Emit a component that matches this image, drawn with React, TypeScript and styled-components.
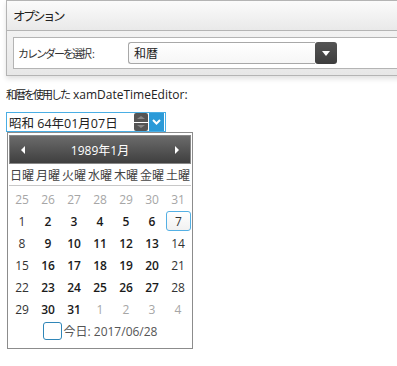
import React from "react";
import styled, { createGlobalStyle } from "styled-components";

const Global = createGlobalStyle`
  html, body { margin: 0; padding: 0; background: #fff; overflow: hidden; }
  body { font-family: "Open Sans", "Noto Sans CJK JP", sans-serif; color: #222; }
`;

const Page = styled.div`
  width: 397px;
  height: 366px;
  overflow: hidden;
  position: relative;
`;

const Panel = styled.section`
  margin-left: 6px;
  width: 400px;
  border: 1px solid #b4b4b4;
  box-shadow: 0 3px 5px rgba(0, 0, 0, 0.12);
`;

const PanelHeader = styled.div`
  height: 29px;
  display: flex;
  align-items: center;
  padding-left: 6px;
  font-size: 12.5px;
  letter-spacing: -2.5px;
  color: #222;
  background: linear-gradient(#fbfbfb, #e9e9e9);
  border-bottom: 1px solid #b4b4b4;
`;

const PanelBody = styled.div`
  background: linear-gradient(#f2f2f2, #e7e7e7);
  padding: 6px 0 6px 6px;
`;

const OptionRow = styled.div`
  height: 30px;
  display: flex;
  align-items: center;
  background: #fff;
  border: 1px solid #b4b4b4;
  border-right: none;
  padding-left: 4px;
`;

const Label = styled.span`
  width: 110px;
  font-size: 11px;
  letter-spacing: -2px;
  color: #333;
`;

const Colon = styled.span`
  letter-spacing: 0;
  margin-left: 2px;
`;

const Combo = styled.div`
  width: 181px;
  height: 20px;
  border: 1px solid #a8a8a8;
  border-right: none;
  border-radius: 3px 0 0 3px;
  display: flex;
  align-items: center;
  padding-left: 5px;
  font-size: 12px;
  color: #222;
  background: linear-gradient(#fff, #f6f6f6);
`;

const ComboButton = styled.div`
  width: 22px;
  height: 22px;
  border-radius: 3px;
  background: linear-gradient(#555, #3d3d3d);
  display: flex;
  align-items: center;
  justify-content: center;
  &::after {
    content: "";
    border-left: 4px solid transparent;
    border-right: 4px solid transparent;
    border-top: 5px solid #fff;
  }
`;

const Caption = styled.div`
  margin: 12px 0 0 6px;
  font-size: 12px;
  color: #222;
  height: 14px;
  line-height: 14px;
  white-space: nowrap;
`;

const Jp = styled.span`
  font-size: 11px;
  letter-spacing: -2px;
  margin-right: 4px;
`;

const EditorWrap = styled.div`
  margin: 10px 0 0 6px;
  width: 187px;
`;

const Editor = styled.div`
  width: 158px;
  height: 18px;
  border: 1px solid #4aaee4;
  display: flex;
  align-items: center;
  background: #fff;
`;

const EditorText = styled.span`
  flex: 1;
  padding-left: 2px;
  font-size: 12.5px;
  color: #222;
  white-space: nowrap;
`;

const Spin = styled.div`
  width: 14px;
  height: 18px;
  display: flex;
  flex-direction: column;
  gap: 1px;
  margin-right: 1px;
`;

const SpinHalf = styled.div<{ $up?: boolean }>`
  flex: 1;
  background: #555;
  border-radius: ${(p) => (p.$up ? "2px 2px 0 0" : "0 0 2px 2px")};
  display: flex;
  align-items: center;
  justify-content: center;
  &::after {
    content: "";
    border-left: 4px solid transparent;
    border-right: 4px solid transparent;
    ${(p) => (p.$up ? "border-bottom: 3px solid #888;" : "border-top: 3px solid #888;")}
  }
`;

const DropButton = styled.div`
  width: 15px;
  height: 18px;
  background: #2b9ad8;
  margin-right: 1px;
  display: flex;
  align-items: center;
  justify-content: center;
`;

const Calendar = styled.div`
  margin-left: 1px;
  width: 184px;
  height: 213px;
  border: 1px solid #8c8c8c;
  background: #fff;
  display: flex;
  flex-direction: column;
  padding-top: 2px;
`;

const CalHeader = styled.div`
  margin: 0 1px;
  height: 27px;
  border: 1px solid #888;
  background: linear-gradient(#6b6b6b, #3f3f3f);
  display: flex;
  align-items: center;
  justify-content: space-between;
  padding: 0 11px;
  color: #fff;
  font-size: 12px;
`;

const Arrow = styled.span<{ $dir: "l" | "r" }>`
  width: 0;
  height: 0;
  border-top: 4px solid transparent;
  border-bottom: 4px solid transparent;
  ${(p) => (p.$dir === "l" ? "border-right: 4px solid #fff;" : "border-left: 4px solid #fff;")}
`;

const Grid = styled.div`
  display: grid;
  grid-template-columns: repeat(7, 26px);
  margin-left: 1px;
`;

const DayName = styled.div`
  height: 21px;
  display: flex;
  align-items: center;
  justify-content: center;
  font-size: 12px;
  color: #444;
  border-bottom: 1px solid #c8c8c8;
  margin-bottom: 2px;
  font-family: "Noto Sans CJK JP", sans-serif;
`;

const DayCell = styled.div<{ $kind: "other" | "weekend" | "weekday"; $selected?: boolean }>`
  height: 22px;
  display: flex;
  align-items: center;
  justify-content: center;
  font-size: 12px;
  font-weight: ${(p) => (p.$kind === "weekday" ? 600 : 400)};
  color: ${(p) => (p.$kind === "other" ? "#a6a6a6" : p.$kind === "weekday" ? "#1a1a1a" : "#333")};
  box-sizing: border-box;
  ${(p) =>
    p.$selected
      ? "border: 1px solid #54b0e4; border-radius: 3px; background: linear-gradient(#fff, #f1f1f1); height: 20px; margin: 1px 0 1px 1px;"
      : ""}
`;

const TodayRow = styled.div`
  display: flex;
  align-items: center;
  justify-content: center;
  gap: 2px;
  margin-top: 1px;
  height: 20px;
  font-size: 12px;
  color: #555;
`;

const TodayBox = styled.span`
  width: 17px;
  height: 16px;
  border: 1px solid #2f86b8;
  border-radius: 3px;
`;

const dayNames = ["日曜", "月曜", "火曜", "水曜", "木曜", "金曜", "土曜"];

type Cell = { d: number; kind: "other" | "weekend" | "weekday"; selected?: boolean };

const buildCells = (): Cell[] => {
  const cells: Cell[] = [];
  for (let d = 25; d <= 31; d++) cells.push({ d, kind: "other" });
  for (let d = 1; d <= 31; d++) {
    const col = (d - 1) % 7;
    cells.push({ d, kind: col === 0 || col === 6 ? "weekend" : "weekday", selected: d === 7 });
  }
  for (let d = 1; d <= 4; d++) cells.push({ d, kind: "other" });
  return cells;
};

export default function App() {
  const cells = buildCells();
  return (
    <Page>
      <Global />
      <Panel>
        <PanelHeader>オプション</PanelHeader>
        <PanelBody>
          <OptionRow>
            <Label>
              カレンダーを選択<Colon>:</Colon>
            </Label>
            <Combo>和暦</Combo>
            <ComboButton />
          </OptionRow>
        </PanelBody>
      </Panel>
      <Caption>
        <Jp>和暦を使用した</Jp>xamDateTimeEditor:
      </Caption>
      <EditorWrap>
        <Editor>
          <EditorText>昭和 64年01月07日</EditorText>
          <Spin>
            <SpinHalf $up />
            <SpinHalf />
          </Spin>
          <DropButton>
            <svg width="9" height="6" viewBox="0 0 9 6">
              <path d="M1 1 L4.5 4.5 L8 1" fill="none" stroke="#fff" strokeWidth="2" />
            </svg>
          </DropButton>
        </Editor>
        <Calendar>
          <CalHeader>
            <Arrow $dir="l" />
            <span>1989年1月</span>
            <Arrow $dir="r" />
          </CalHeader>
          <Grid>
            {dayNames.map((n) => (
              <DayName key={n}>{n}</DayName>
            ))}
            {cells.map((c, i) => (
              <DayCell key={i} $kind={c.kind} $selected={c.selected}>
                {c.d}
              </DayCell>
            ))}
          </Grid>
          <TodayRow>
            <TodayBox />
            <span>今日: 2017/06/28</span>
          </TodayRow>
        </Calendar>
      </EditorWrap>
    </Page>
  );
}
